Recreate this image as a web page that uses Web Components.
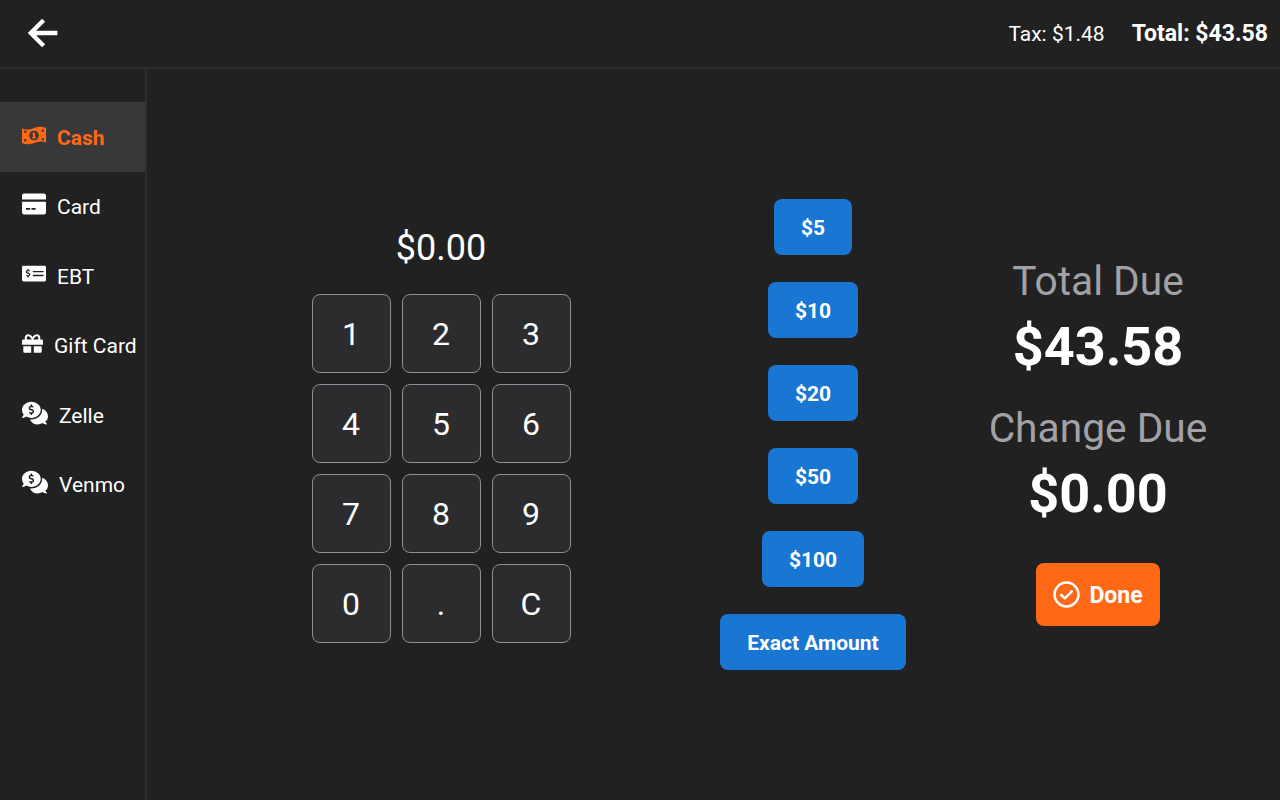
<!DOCTYPE html>
<html>
<head>
<meta charset="utf-8">
<title>Payment</title>
<style>
    html, body { margin: 0; height: 100%; background: #212121; }
    body { font-family: Roboto, "Liberation Sans", sans-serif; color: #fff; }
</style>
</head>
<body>
<pos-app></pos-app>

<script>
const circle = (x, y, r) => `M${x - r} ${y}a${r} ${r} 0 1 0 ${r * 2} 0a${r} ${r} 0 1 0 ${-r * 2} 0z`;
const ICONS = {
    cash: ['0 2.5 24 19', 'M0 5C4 7 8 6 12 4.5S20 2.5 24 4.500V19C20 17 16 18 12 19.500S4 21.500 0 19.500z' + circle(3.2, 8.2, 1.2) + circle(20.8, 7.2, 1.2) + circle(3.2, 16.8, 1.2) + circle(20.8, 15.800, 1.2) + circle(12, 12, 4.8) + 'M11 9.200h2v4.600h1v1.300h-4v-1.300h1v-3h-1z'],
    card: ['0 0 576 512', 'M0 432c0 26.5 21.5 48 48 48h480c26.5 0 48-21.5 48-48V208H0v224zM96 340h100v40H96zm130 0h100v40H226zM576 80v80H0V80c0-26.5 21.5-48 48-48h480c26.5 0 48 21.5 48 48z'],
    ebt: ['0 0 640 512', 'M608 64H32C14.33 64 0 78.33 0 96v320c0 17.67 14.33 32 32 32h576c17.67 0 32-14.33 32-32V96c0-17.67-14.33-32-32-32zM176 327.88V344c0 4.42-3.58 8-8 8h-16c-4.42 0-8-3.58-8-8v-16.29c-11.29-.58-22.27-4.52-31.37-11.35-3.9-2.93-4.1-8.77-.57-12.14l11.75-11.21c2.77-2.64 6.89-2.76 10.13-.73 3.87 2.42 8.26 3.72 12.82 3.72h28.11c6.5 0 11.8-5.92 11.8-13.19 0-5.95-3.61-11.19-8.77-12.73l-45-13.5c-18.59-5.58-31.58-23.42-31.58-43.39 0-24.52 19.05-44.44 42.67-45.07V152c0-4.42 3.58-8 8-8h16c4.42 0 8 3.58 8 8v16.29c11.29.58 22.27 4.51 31.37 11.35 3.9 2.93 4.1 8.77.57 12.14l-11.75 11.21c-2.77 2.64-6.89 2.76-10.13.73-3.87-2.43-8.26-3.72-12.82-3.72h-28.11c-6.5 0-11.8 5.92-11.8 13.19 0 5.95 3.61 11.19 8.77 12.73l45 13.5c18.59 5.58 31.58 23.42 31.58 43.39 0 24.53-19.05 44.44-42.67 45.07zM576 312c0 4.42-3.58 8-8 8H296c-4.42 0-8-3.58-8-8v-16c0-4.42 3.58-8 8-8h272c4.42 0 8 3.58 8 8v16zm0-96c0 4.42-3.58 8-8 8H296c-4.42 0-8-3.58-8-8v-16c0-4.42 3.58-8 8-8h272c4.42 0 8 3.58 8 8v16z'],
    gift: ['0 0 512 512', 'M32 448c0 17.7 14.3 32 32 32h160V320H32v128zm256 32h160c17.7 0 32-14.3 32-32V320H288v160zm192-320h-42.1c6.2-12.1 10.1-25.5 10.1-40 0-48.5-39.5-88-88-88-41.6 0-68.5 21.3-103 68.3-34.5-47-61.4-68.3-103-68.3-48.5 0-88 39.5-88 88 0 14.5 3.8 27.9 10.1 40H32c-17.7 0-32 14.3-32 32v80c0 8.8 7.2 16 16 16h480c8.8 0 16-7.2 16-16v-80c0-17.7-14.3-32-32-32zm-326.1 0c-22.1 0-40-17.9-40-40s17.9-40 40-40c19.9 0 34.6 3.3 86.1 80h-86.1zm206.1 0h-86.1c51.4-76.5 65.7-80 86.1-80 22.1 0 40 17.9 40 40s-17.9 40-40 40z'],
    chat: ['0 0 576 512', 'M416 192c0-88.37-93.12-160-208-160S0 103.63 0 192c0 34.27 14.13 65.95 37.97 91.98C24.61 314.22 2.52 338.16 2.2 338.48A7.995 7.995 0 0 0 8 352c36.52 0 66.87-12.28 88.7-24.98C128.96 342.76 167.1 352 208 352c114.88 0 208-71.63 208-160zm-224 96v-16.29c-11.29-.58-22.27-4.52-31.37-11.35-3.9-2.93-4.1-8.77-.57-12.14l11.75-11.21c2.77-2.64 6.89-2.76 10.13-.73 3.87 2.42 8.26 3.72 12.82 3.72h28.11c6.5 0 11.8-5.92 11.8-13.19 0-5.95-3.61-11.19-8.77-12.73l-45-13.5c-18.59-5.58-31.58-23.42-31.58-43.39 0-24.52 19.05-44.44 42.67-45.07V96c0-4.42 3.58-8 8-8h16c4.42 0 8 3.58 8 8v16.29c11.29.58 22.27 4.51 31.37 11.35 3.9 2.93 4.1 8.77.57 12.14l-11.75 11.21c-2.77 2.64-6.89 2.76-10.13.73-3.87-2.43-8.26-3.72-12.82-3.72h-28.11c-6.5 0-11.8 5.92-11.8 13.19 0 5.95 3.61 11.19 8.77 12.73l45 13.5c18.59 5.58 31.58 23.42 31.58 43.39 0 24.53-19.05 44.44-42.67 45.07V288c0 4.42-3.58 8-8 8h-16c-4.42 0-8-3.58-8-8zm346.01 123.99C561.87 385.96 576 354.27 576 320c0-66.94-53.49-124.2-129.33-148.07.86 6.6 1.33 13.29 1.33 20.07 0 105.87-107.66 192-240 192-10.78 0-21.32-.77-31.73-1.88C207.8 443.19 270.55 480 344 480c40.9 0 79.04-9.24 111.3-24.98C477.13 467.72 507.48 480 544 480c3.2 0 6.09-1.91 7.34-4.84 1.27-2.94.66-6.34-1.55-8.67-.31-.31-22.42-24.25-35.78-54.5z']
};

class PosHeader extends HTMLElement {
    constructor(){
        super();
        this.attachShadow({mode:'open'});
        this.shadowRoot.innerHTML = `
        <style>
            :host{ display:flex; align-items:center; justify-content:space-between; height:67px; padding:0 12px 0 23px; border-bottom:2px solid #2e2e2e; box-sizing:content-box; }
            svg{ display:block; width:40px; height:40px; margin-top:-2px; }
            .sums{ display:flex; align-items:center; gap:27px; }
            .tax{ font-size:21px; }
            .total{ font-size:23px; font-weight:700; }
        </style>
        <svg viewBox="0 0 512 512" fill="none" stroke="#fff" stroke-width="56" stroke-linecap="square"><path d="M244 400L100 256l144-144M120 256h292"/></svg>
        <div class="sums"><span class="tax">Tax: $1.48</span><span class="total">Total: $43.58</span></div>`;
    }
}

class PosNavItem extends HTMLElement {
    constructor(){
        super();
        this.attachShadow({mode:'open'});
        const icon = ICONS[this.getAttribute('icon')];
        const w = this.getAttribute('iw');
        const h = this.getAttribute('ih') || w;
        this.shadowRoot.innerHTML = `
        <style>
            :host{ display:flex; align-items:center; gap:11px; height:69.5px; padding-left:22px; font-size:21px; color:#fff; }
            :host([active]){ background:#38383a; color:#ff6915; font-weight:700; }
            svg{ display:block; width:${w}px; height:${h}px; fill:currentColor; flex:none; position:relative; top:-2px; }
            :host([active]) svg{ top:-1px; }
            span{ position:relative; top:1px; }
        </style>
        <svg viewBox="${icon[0]}" preserveAspectRatio="none"><path fill-rule="evenodd" d="${icon[1]}"/></svg>
        <span><slot></slot></span>`;
    }
}

class PosSidebar extends HTMLElement {
    constructor(){
        super();
        this.attachShadow({mode:'open'});
        this.shadowRoot.innerHTML = `
        <style>
            :host{ display:block; width:145px; flex:none; padding-top:33px; border-right:2px solid #2e2e2e; }
        </style>
        <slot></slot>`;
    }
}

class PosKeypad extends HTMLElement {
    constructor(){
        super();
        this.attachShadow({mode:'open'});
        const keys = ['1','2','3','4','5','6','7','8','9','0','.','C'];
        this.shadowRoot.innerHTML = `
        <style>
            :host{ display:flex; flex-direction:column; align-items:center; justify-content:center; padding-left:15px; }
            .amount{ font-size:36px; line-height:42px; margin-bottom:25px; }
            .grid{ display:grid; grid-template-columns:repeat(3,79px); grid-auto-rows:79px; gap:11px; }
            button{ font:400 32px Roboto, sans-serif; color:#fff; background:#2c2c2e; border:1px solid #8e8e93; border-radius:8px; padding:1px 0 0; }
        </style>
        <div class="amount">$0.00</div>
        <div class="grid">${keys.map(k => `<button>${k}</button>`).join('')}</div>`;
    }
}

class PosQuickCash extends HTMLElement {
    constructor(){
        super();
        this.attachShadow({mode:'open'});
        const amounts = ['$5','$10','$20','$50','$100','Exact Amount'];
        this.shadowRoot.innerHTML = `
        <style>
            :host{ display:flex; flex-direction:column; align-items:center; justify-content:center; gap:27px; }
            button{ font:700 21px Roboto, sans-serif; color:#fff; background:#1976d2; border:0; border-radius:8px; height:56px; padding:2px 27px 0; white-space:nowrap; }
        </style>
        ${amounts.map(a => `<button>${a}</button>`).join('')}`;
    }
}

class PosTotals extends HTMLElement {
    constructor(){
        super();
        this.attachShadow({mode:'open'});
        this.shadowRoot.innerHTML = `
        <style>
            :host{ display:flex; flex-direction:column; align-items:center; justify-content:center; padding:14px 0 0 10px; text-align:center; }
            .label{ font-size:40.700px; line-height:47px; color:#a1a1a6; margin-bottom:10px; }
            .value{ font-size:54px; line-height:63px; font-weight:700; margin-bottom:27px; }
            button{ display:flex; align-items:center; gap:9px; height:63px; padding:2px 17.7px 0; margin-top:11px; font:700 23px Roboto, sans-serif; color:#fff; background:#ff6915; border:0; border-radius:8px; }
            svg{ display:block; width:27px; height:27px; margin-top:-1px; }
        </style>
        <div class="label">Total Due</div>
        <div class="value">$43.58</div>
        <div class="label">Change Due</div>
        <div class="value">$0.00</div>
        <button>
            <svg viewBox="0 0 28 28" fill="none" stroke="#fff" stroke-width="2.600"><circle cx="14" cy="14" r="12.4"/><path d="M8.500 14.500l3.800 3.600 7.200-7.400" stroke-linecap="round" stroke-linejoin="round"/></svg>
            Done
        </button>`;
    }
}

class PosApp extends HTMLElement {
    constructor(){
        super();
        this.attachShadow({mode:'open'});
        this.shadowRoot.innerHTML = `
        <style>
            :host{ display:flex; flex-direction:column; height:800px; width:1280px; overflow:hidden; }
            .body{ flex:1; display:flex; min-height:0; }
            .main{ flex:1; display:grid; grid-template-columns:573px 186px 1fr; }
        </style>
        <pos-header></pos-header>
        <div class="body">
            <pos-sidebar>
                <pos-nav-item icon="cash" iw="24" ih="19" active>Cash</pos-nav-item>
                <pos-nav-item icon="card" iw="24">Card</pos-nav-item>
                <pos-nav-item icon="ebt" iw="24" ih="21">EBT</pos-nav-item>
                <pos-nav-item icon="gift" iw="21">Gift Card</pos-nav-item>
                <pos-nav-item icon="chat" iw="26">Zelle</pos-nav-item>
                <pos-nav-item icon="chat" iw="26">Venmo</pos-nav-item>
            </pos-sidebar>
            <div class="main">
                <pos-keypad></pos-keypad>
                <pos-quick-cash></pos-quick-cash>
                <pos-totals></pos-totals>
            </div>
        </div>`;
    }
}

customElements.define('pos-header', PosHeader);
customElements.define('pos-nav-item', PosNavItem);
customElements.define('pos-sidebar', PosSidebar);
customElements.define('pos-keypad', PosKeypad);
customElements.define('pos-quick-cash', PosQuickCash);
customElements.define('pos-totals', PosTotals);
customElements.define('pos-app', PosApp);
</script>
</body>
</html>
